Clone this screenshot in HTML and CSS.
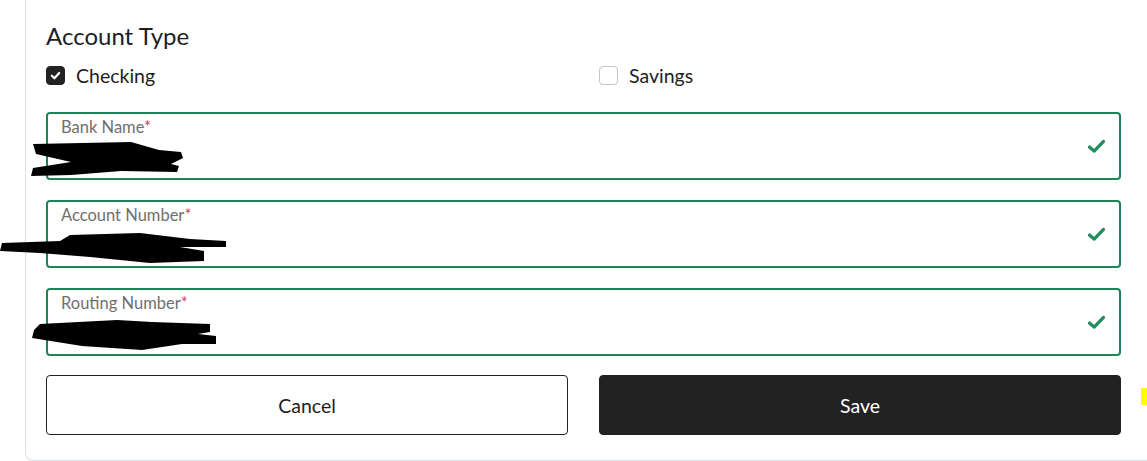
FILE: index.html
```html
<!DOCTYPE html>
<html>
<head>
<meta charset="utf-8">
<link rel="stylesheet" href="styles.css">
</head>
<body>
<div class="card">
  <h2 class="title">Account Type</h2>
  <div class="types">
    <label class="opt">
      <span class="box checked">
        <svg viewBox="0 0 12 12" width="11" height="11"><path d="M2 6.3 L4.8 9 L10 3.3" fill="none" stroke="#fff" stroke-width="2.4" stroke-linecap="round" stroke-linejoin="round"/></svg>
      </span>
      <span>Checking</span>
    </label>
    <label class="opt">
      <span class="box"></span>
      <span>Savings</span>
    </label>
  </div>

  <div class="field">
    <div class="lbl">Bank Name<span class="req">*</span></div>
    <div class="val"></div>
    <svg class="ok" viewBox="0 0 20 16" width="19" height="15"><path d="M2.5 8.5 L7.5 13 L17.5 2.5" fill="none" stroke="#1f8a5b" stroke-width="3.4" stroke-linecap="round" stroke-linejoin="round"/></svg>
    <svg class="scrib s1" viewBox="0 0 160 36" width="160" height="36"><path d="M2 2 L100 0 L128 8 L150 10 L152 16 L140 22 L148 24 L146 30 L90 29 L40 33 L0 34 L2 26 L40 20 L5 12 Z" fill="#000"/></svg>
  </div>

  <div class="field">
    <div class="lbl">Account Number<span class="req">*</span></div>
    <div class="val"></div>
    <svg class="ok" viewBox="0 0 20 16" width="19" height="15"><path d="M2.5 8.5 L7.5 13 L17.5 2.5" fill="none" stroke="#1f8a5b" stroke-width="3.4" stroke-linecap="round" stroke-linejoin="round"/></svg>
    <svg class="scrib s2" viewBox="0 0 230 34" width="230" height="34"><path d="M70 2 L140 0 L190 6 L226 8 L226 14 L180 14 L204 18 L204 28 L150 30 L90 24 L40 20 L0 18 L2 10 L60 8 Z" fill="#000"/></svg>
  </div>

  <div class="field">
    <div class="lbl">Routing Number<span class="req">*</span></div>
    <div class="val"></div>
    <svg class="ok" viewBox="0 0 20 16" width="19" height="15"><path d="M2.5 8.5 L7.5 13 L17.5 2.5" fill="none" stroke="#1f8a5b" stroke-width="3.4" stroke-linecap="round" stroke-linejoin="round"/></svg>
    <svg class="scrib s3" viewBox="0 0 185 32" width="185" height="32"><path d="M8 4 L85 0 L120 2 L178 4 L178 12 L166 14 L184 16 L184 24 L150 24 L110 30 L50 26 L0 18 L2 10 Z" fill="#000"/></svg>
  </div>

  <div class="actions">
    <button class="btn cancel">Cancel</button>
    <button class="btn save">Save</button>
  </div>
</div>
<div class="mark"></div>
</body>
</html>
```

FILE: styles.css
```css
html, body {
  margin: 0;
  padding: 0;
  background: #fff;
}

body {
  font-family: "Lato", "Open Sans", sans-serif;
  color: #222;
  position: relative;
  width: 1147px;
  height: 461px;
  overflow: hidden;
}

.card {
  margin-left: 25px;
  width: 1140px;
  box-sizing: border-box;
  border-left: 1px solid #dcdfe2;
  border-bottom: 1px solid #dcdfe2;
  border-radius: 0 0 0 8px;
  padding: 20px 0 25px 20px;
  height: 461px;
}

.title {
  margin: 0;
  font-size: 24px;
  font-weight: 400;
  line-height: 32px;
  color: #1e1e1e;
}

.types {
  display: grid;
  grid-template-columns: 522px 522px;
  column-gap: 31px;
  margin-top: 9px;
  height: 29px;
  align-items: center;
}

.opt {
  display: flex;
  align-items: center;
  gap: 11px;
  font-size: 19.5px;
  color: #1e1e1e;
}

.box {
  width: 19px;
  height: 19px;
  box-sizing: border-box;
  border-radius: 4px;
  border: 1px solid #c4c4c4;
  background: #fff;
  display: flex;
  align-items: center;
  justify-content: center;
}

.box.checked {
  background: #222;
  border-color: #222;
}

.field {
  position: relative;
  width: 1075px;
  height: 68px;
  box-sizing: border-box;
  border: 2px solid #1e8457;
  border-radius: 4px;
  margin-top: 20px;
  padding: 2px 13px 0;
}

.types + .field {
  margin-top: 22px;
}

.lbl {
  font-size: 16.5px;
  line-height: 22px;
  color: #6f6f6f;
}

.req {
  color: #d2455f;
}

.ok {
  position: absolute;
  right: 13px;
  top: 25px;
}

.scrib {
  position: absolute;
}

.s1 { left: -17px; top: 28px; }
.s2 { left: -48px; top: 31px; }
.s3 { left: -16px; top: 30px; }

.actions {
  display: grid;
  grid-template-columns: 522px 522px;
  column-gap: 31px;
  margin-top: 19px;
}

.btn {
  height: 60px;
  border-radius: 4px;
  font-family: "Lato", "Open Sans", sans-serif;
  font-size: 19.5px;
  cursor: pointer;
}

.cancel {
  background: #fff;
  border: 1px solid #222;
  color: #1e1e1e;
}

.save {
  background: #222;
  border: 1px solid #222;
  color: #fff;
}

.mark {
  position: absolute;
  left: 1141px;
  top: 388px;
  width: 6px;
  height: 17px;
  background: #ffff00;
}
```
